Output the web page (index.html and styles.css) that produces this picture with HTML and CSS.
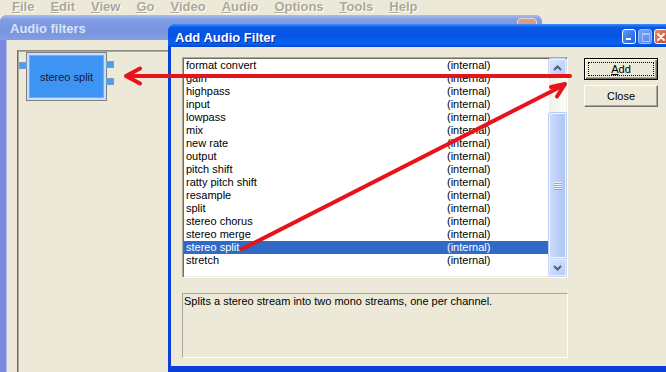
FILE: index.html
```html
<!DOCTYPE html>
<html lang="en">
<head>
  <meta charset="UTF-8" />
  <title>Audio filters</title>
  <link rel="stylesheet" href="styles.css">
</head>
<body>
  <!-- Menu bar (disabled look) -->
  <div class="menubar">
    <span><u>F</u>ile</span>
    <span><u>E</u>dit</span>
    <span><u>V</u>iew</span>
    <span><u>G</u>o</span>
    <span><u>V</u>ideo</span>
    <span><u>A</u>udio</span>
    <span><u>O</u>ptions</span>
    <span><u>T</u>ools</span>
    <span><u>H</u>elp</span>
  </div>

  <div class="desktop">
    <!-- Audio filters window -->
    <div class="mdi">
      <div class="mdi-title">
        <span>Audio filters</span>
        <span class="mdi-close"></span>
      </div>
      <div class="mdi-body">
        <div class="canvas">
          <div class="node">
            <i class="pin pin-in"></i>
            <i class="pin pin-out1"></i>
            <i class="pin pin-out2"></i>
            stereo split
          </div>
        </div>
      </div>
    </div>

    <!-- Add Audio Filter dialog -->
    <div class="dialog">
      <div class="dlg-title">
        <span>Add Audio Filter</span>
        <div class="tbtns">
          <span class="tbtn tbtn-min"></span>
          <span class="tbtn tbtn-max"></span>
          <span class="tbtn tbtn-close">
            <svg width="12" height="12" viewBox="0 0 12 12"><path d="M3 3 L9 9 M9 3 L3 9" stroke="#fff" stroke-width="2" stroke-linecap="round"/></svg>
          </span>
        </div>
      </div>
      <div class="dlg-body">
        <div class="listbox">
          <div class="rows">
            <div class="row"><span>format convert</span><span>(internal)</span></div>
            <div class="row"><span>gain</span><span>(internal)</span></div>
            <div class="row"><span>highpass</span><span>(internal)</span></div>
            <div class="row"><span>input</span><span>(internal)</span></div>
            <div class="row"><span>lowpass</span><span>(internal)</span></div>
            <div class="row"><span>mix</span><span>(internal)</span></div>
            <div class="row"><span>new rate</span><span>(internal)</span></div>
            <div class="row"><span>output</span><span>(internal)</span></div>
            <div class="row"><span>pitch shift</span><span>(internal)</span></div>
            <div class="row"><span>ratty pitch shift</span><span>(internal)</span></div>
            <div class="row"><span>resample</span><span>(internal)</span></div>
            <div class="row"><span>split</span><span>(internal)</span></div>
            <div class="row"><span>stereo chorus</span><span>(internal)</span></div>
            <div class="row"><span>stereo merge</span><span>(internal)</span></div>
            <div class="row sel"><span>stereo split</span><span>(internal)</span></div>
            <div class="row"><span>stretch</span><span>(internal)</span></div>
          </div>
          <div class="vscroll">
            <div class="sb-btn">
              <svg width="9" height="6" viewBox="0 0 9 6"><polyline points="1,5 4.5,1.5 8,5" fill="none" stroke="#4D6185" stroke-width="2"/></svg>
            </div>
            <div class="sb-thumb"><i class="grip"></i></div>
            <div class="sb-space"></div>
            <div class="sb-btn">
              <svg width="9" height="6" viewBox="0 0 9 6"><polyline points="1,1 4.5,4.5 8,1" fill="none" stroke="#4D6185" stroke-width="2"/></svg>
            </div>
          </div>
        </div>

        <div class="btns">
          <button class="btn btn-default"><u>A</u>dd</button>
          <button class="btn">Close</button>
        </div>

        <div class="desc">Splits a stereo stream into two mono streams, one per channel.</div>
      </div>
    </div>
  </div>

  <!-- Red annotation arrows -->
  <svg class="arrows" width="666" height="372" viewBox="0 0 666 372">
    <g fill="none" stroke="#E8121A" stroke-width="4" stroke-linecap="round" stroke-linejoin="round">
      <line x1="570" y1="76" x2="128" y2="76"/>
      <polyline points="140,68.5 126,76 140,83.5"/>
      <line x1="242" y1="249" x2="564" y2="85"/>
      <polyline points="551,87 565,84 557,96.5"/>
    </g>
  </svg>
</body>
</html>
```

FILE: styles.css
```css
* {
  box-sizing: border-box;
}

body {
  margin: 0;
  width: 666px;
  height: 372px;
  overflow: hidden;
  position: relative;
  background: #ECE9D8;
  font-family: "Liberation Sans", Arial, sans-serif;
  font-size: 11px;
  color: #000;
}

/* Menu bar */
.menubar {
  height: 15px;
  display: flex;
  gap: 16px;
  padding-left: 12px;
  font-size: 13px;
  font-weight: bold;
  line-height: 13px;
  color: #ACA899;
  text-shadow: 1px 1px 0 #fff;
}

.desktop {
  position: relative;
  height: 357px;
}

/* Audio filters window */
.mdi {
  width: 542px;
  height: 100%;
  display: flex;
  flex-direction: column;
  background: #7C8ADD;
  border-radius: 7px 7px 0 0;
}

.mdi-title {
  height: 25px;
  padding: 6px 0 0 10px;
  display: flex;
  justify-content: space-between;
  font-size: 13px;
  font-weight: bold;
  line-height: 15px;
  color: #D8E4F8;
  background: linear-gradient(#A9C0F1, #819DE4 18%, #7894DE 60%, #829EE5);
  border-radius: 7px 7px 0 0;
}

.mdi-close {
  width: 20px;
  height: 19px;
  margin: -3px 5px 0 0;
  border: 1px solid #EED6CF;
  border-radius: 4px;
  background: #D99B8F;
}

.mdi-body {
  flex: 1;
  margin-left: 6px;
  padding: 10px 0 0 11px;
  background: #ECE9D8;
  box-shadow: inset 1px 0 #B6C0EE;
}

.canvas {
  position: relative;
  height: 100%;
  border-top: 1px solid #8E8C80;
  border-left: 1px solid #6F6D62;
  box-shadow: inset 1px 1px #ACA899;
}

/* Filter node on the canvas */
.node {
  position: absolute;
  left: 8px;
  top: 1px;
  width: 81px;
  height: 49px;
  display: flex;
  align-items: center;
  justify-content: center;
  border: 1px solid #7E8284;
  background: #3E94F2;
  box-shadow: inset 0 0 0 2px #CADFF6, inset 0 0 0 3px #74AEEE;
  color: #16163C;
  font-size: 11px;
}

.pin {
  position: absolute;
  width: 8px;
  height: 7px;
  background: #4C9CF2;
  border: 1px solid #7D9CC4;
}

.pin-in   { left: -8px; top: 9px; }
.pin-out1 { left: 79px; top: 8px; }
.pin-out2 { left: 79px; top: 25px; }

/* Dialog */
.dialog {
  position: absolute;
  left: 168px;
  top: 9px;
  width: 510px;
  height: 362px;
  display: flex;
  flex-direction: column;
  padding-bottom: 6px;
  background: #0A40D8;
  border-radius: 8px 8px 0 0;
}

.dlg-title {
  height: 23px;
  padding: 6px 10px 0 7px;
  display: flex;
  justify-content: space-between;
  align-items: flex-start;
  font-size: 13px;
  font-weight: bold;
  line-height: 15px;
  color: #fff;
  text-shadow: 1px 1px 0 #0A2A9A;
  background: linear-gradient(#3F8FF9 0%, #0A5AE8 14%, #0454E4 50%, #0862F0 85%, #0048D2 100%);
  border-radius: 8px 8px 0 0;
}

.tbtns {
  display: flex;
  gap: 2px;
  margin-top: -1px;
}

.tbtn {
  position: relative;
  width: 14px;
  height: 15px;
  border: 1px solid #fff;
  border-radius: 3px;
  background: linear-gradient(135deg, #5A9CFB, #1E5CE0);
}

.tbtn-min::after {
  content: "";
  position: absolute;
  left: 3px;
  bottom: 3px;
  width: 5px;
  height: 2px;
  background: #fff;
}

.tbtn-max {
  border-color: #9EBBF5;
  background: linear-gradient(135deg, #78A6F6, #5586EC);
}

.tbtn-max::after {
  content: "";
  position: absolute;
  left: 3px;
  top: 3px;
  width: 6px;
  height: 6px;
  border: 1px solid #A9C3F6;
  border-top-width: 2px;
}

.tbtn-close {
  display: flex;
  align-items: center;
  justify-content: center;
  background: linear-gradient(135deg, #EE8A6C, #D2431F);
}

.dlg-body {
  margin: 0 3px;
  padding: 10px 0 8px 11px;
  display: grid;
  grid-template-columns: 386px 74px;
  grid-template-rows: 221px 65px;
  column-gap: 16px;
  row-gap: 15px;
  background: #ECE9D8;
}

/* List box */
.listbox {
  display: flex;
  padding: 1px;
  background: #fff;
  border: 1px solid;
  border-color: #ACA899 #fff #fff #ACA899;
  box-shadow: inset 1px 1px #716F64, inset -1px -1px #F1EFE2;
}

.rows {
  flex: 1;
}

.row {
  display: grid;
  grid-template-columns: 261px auto;
  height: 13px;
  padding-left: 2px;
  line-height: 13px;
  white-space: nowrap;
}

.row.sel {
  background: #316AC5;
  color: #fff;
}

.vscroll {
  width: 17px;
  display: flex;
  flex-direction: column;
  background: linear-gradient(to right, #F1EFE7, #FDFDFA);
}

.sb-btn {
  height: 17px;
  display: flex;
  align-items: center;
  justify-content: center;
  border: 1px solid #E6EEFD;
  border-radius: 2px;
  background: linear-gradient(135deg, #DCE7FE, #B5CAF7);
  box-shadow: 0 0 0 1px #C6D6F8;
}

.sb-thumb {
  height: 145px;
  margin-top: 37px;
  display: flex;
  align-items: center;
  justify-content: center;
  border: 1px solid #F2F6FE;
  border-radius: 2px;
  background: linear-gradient(to right, #CCDBFC, #B8CDF8 60%, #AFC6F5);
  box-shadow: 0 0 0 1px #BACCF2;
}

.grip {
  width: 8px;
  height: 8px;
  background: repeating-linear-gradient(#EEF4FE 0 1px, #8CA6DE 1px 2px);
}

.sb-space {
  flex: 1;
}

/* Buttons */
.btns {
  display: flex;
  flex-direction: column;
  gap: 5px;
  padding-top: 1px;
}

.btn {
  height: 22px;
  padding: 0;
  font-family: inherit;
  font-size: 11px;
  color: #000;
  background: #ECE9D8;
  border: 1px solid;
  border-color: #fff #716F64 #716F64 #fff;
  box-shadow: inset -1px -1px #ACA899;
}

.btn-default {
  position: relative;
  border-color: #000;
  box-shadow: inset 1px 1px #fff, inset -1px -1px #716F64, inset -2px -2px #ACA899;
}

.btn-default::after {
  content: "";
  position: absolute;
  inset: 3px;
  border: 1px dotted #000;
}

/* Description */
.desc {
  grid-column: 1;
  padding: 1px;
  line-height: 13px;
  border: 1px solid;
  border-color: #ACA899 #fff #fff #ACA899;
}

/* Annotation overlay */
.arrows {
  position: absolute;
  left: 0;
  top: 0;
  pointer-events: none;
}
```
